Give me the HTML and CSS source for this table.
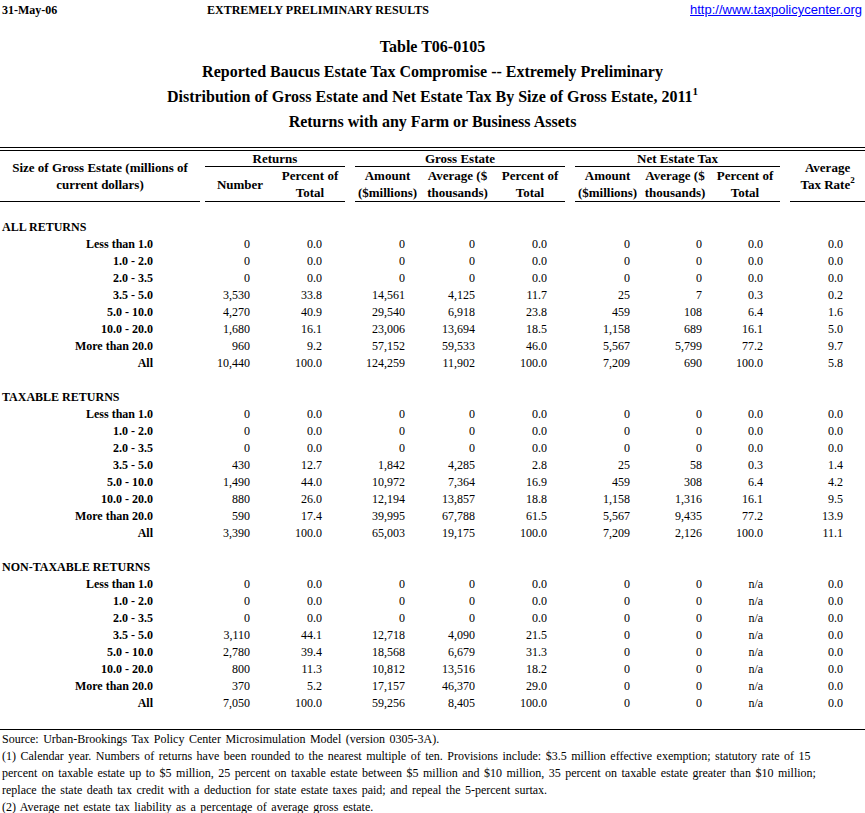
FILE: index.html
```html
<!DOCTYPE html>
<html>
<head>
<meta charset="utf-8">
<title>Table T06-0105</title>
<link rel="stylesheet" href="styles.css">
</head>
<body>
<div class="topbar">
  <span>31-May-06</span>
  <span>EXTREMELY PRELIMINARY RESULTS</span>
  <a href="#">http://www.taxpolicycenter.org</a>
</div>
<div class="titles">
  <div>Table T06-0105</div>
  <div>Reported Baucus Estate Tax Compromise -- Extremely Preliminary</div>
  <div>Distribution of Gross Estate and Net Estate Tax By Size of Gross Estate, 2011<sup>1</sup></div>
  <div>Returns with any Farm or Business Assets</div>
</div>
<table class="data">
  <colgroup>
    <col class="w-lab"><col class="w-sp5"><col class="w-70"><col class="w-70"><col class="w-sp10">
    <col class="w-65"><col class="w-75"><col class="w-70"><col class="w-sp10">
    <col class="w-65"><col class="w-70"><col class="w-70"><col class="w-sp10"><col class="w-75">
  </colgroup>
  <thead>
    <tr class="h1">
      <th rowspan="2" class="u">Size of Gross Estate (millions of<br>current dollars)</th>
      <th rowspan="2"></th>
      <th colspan="2" class="u">Returns</th>
      <th rowspan="2"></th>
      <th colspan="3" class="u">Gross Estate</th>
      <th rowspan="2"></th>
      <th colspan="3" class="u">Net Estate Tax</th>
      <th rowspan="2"></th>
      <th rowspan="2" class="u">Average<br>Tax Rate<sup>2</sup></th>
    </tr>
    <tr class="h2">
      <th class="u">Number</th>
      <th class="u">Percent of<br>Total</th>
      <th class="u">Amount<br>($millions)</th>
      <th class="u">Average ($<br>thousands)</th>
      <th class="u">Percent of<br>Total</th>
      <th class="u">Amount<br>($millions)</th>
      <th class="u">Average ($<br>thousands)</th>
      <th class="u">Percent of<br>Total</th>
    </tr>
  </thead>
  <tbody>
    <tr class="blank"><td colspan="14"></td></tr>
    <tr><td colspan="14" class="sec">ALL RETURNS</td></tr>
    <tr><td>Less than 1.0</td><td></td><td>0</td><td>0.0</td><td></td><td>0</td><td>0</td><td>0.0</td><td></td><td>0</td><td>0</td><td>0.0</td><td></td><td>0.0</td></tr>
    <tr><td>1.0 - 2.0</td><td></td><td>0</td><td>0.0</td><td></td><td>0</td><td>0</td><td>0.0</td><td></td><td>0</td><td>0</td><td>0.0</td><td></td><td>0.0</td></tr>
    <tr><td>2.0 - 3.5</td><td></td><td>0</td><td>0.0</td><td></td><td>0</td><td>0</td><td>0.0</td><td></td><td>0</td><td>0</td><td>0.0</td><td></td><td>0.0</td></tr>
    <tr><td>3.5 - 5.0</td><td></td><td>3,530</td><td>33.8</td><td></td><td>14,561</td><td>4,125</td><td>11.7</td><td></td><td>25</td><td>7</td><td>0.3</td><td></td><td>0.2</td></tr>
    <tr><td>5.0 - 10.0</td><td></td><td>4,270</td><td>40.9</td><td></td><td>29,540</td><td>6,918</td><td>23.8</td><td></td><td>459</td><td>108</td><td>6.4</td><td></td><td>1.6</td></tr>
    <tr><td>10.0 - 20.0</td><td></td><td>1,680</td><td>16.1</td><td></td><td>23,006</td><td>13,694</td><td>18.5</td><td></td><td>1,158</td><td>689</td><td>16.1</td><td></td><td>5.0</td></tr>
    <tr><td>More than 20.0</td><td></td><td>960</td><td>9.2</td><td></td><td>57,152</td><td>59,533</td><td>46.0</td><td></td><td>5,567</td><td>5,799</td><td>77.2</td><td></td><td>9.7</td></tr>
    <tr><td>All</td><td></td><td>10,440</td><td>100.0</td><td></td><td>124,259</td><td>11,902</td><td>100.0</td><td></td><td>7,209</td><td>690</td><td>100.0</td><td></td><td>5.8</td></tr>
    <tr class="blank"><td colspan="14"></td></tr>
    <tr><td colspan="14" class="sec">TAXABLE RETURNS</td></tr>
    <tr><td>Less than 1.0</td><td></td><td>0</td><td>0.0</td><td></td><td>0</td><td>0</td><td>0.0</td><td></td><td>0</td><td>0</td><td>0.0</td><td></td><td>0.0</td></tr>
    <tr><td>1.0 - 2.0</td><td></td><td>0</td><td>0.0</td><td></td><td>0</td><td>0</td><td>0.0</td><td></td><td>0</td><td>0</td><td>0.0</td><td></td><td>0.0</td></tr>
    <tr><td>2.0 - 3.5</td><td></td><td>0</td><td>0.0</td><td></td><td>0</td><td>0</td><td>0.0</td><td></td><td>0</td><td>0</td><td>0.0</td><td></td><td>0.0</td></tr>
    <tr><td>3.5 - 5.0</td><td></td><td>430</td><td>12.7</td><td></td><td>1,842</td><td>4,285</td><td>2.8</td><td></td><td>25</td><td>58</td><td>0.3</td><td></td><td>1.4</td></tr>
    <tr><td>5.0 - 10.0</td><td></td><td>1,490</td><td>44.0</td><td></td><td>10,972</td><td>7,364</td><td>16.9</td><td></td><td>459</td><td>308</td><td>6.4</td><td></td><td>4.2</td></tr>
    <tr><td>10.0 - 20.0</td><td></td><td>880</td><td>26.0</td><td></td><td>12,194</td><td>13,857</td><td>18.8</td><td></td><td>1,158</td><td>1,316</td><td>16.1</td><td></td><td>9.5</td></tr>
    <tr><td>More than 20.0</td><td></td><td>590</td><td>17.4</td><td></td><td>39,995</td><td>67,788</td><td>61.5</td><td></td><td>5,567</td><td>9,435</td><td>77.2</td><td></td><td>13.9</td></tr>
    <tr><td>All</td><td></td><td>3,390</td><td>100.0</td><td></td><td>65,003</td><td>19,175</td><td>100.0</td><td></td><td>7,209</td><td>2,126</td><td>100.0</td><td></td><td>11.1</td></tr>
    <tr class="blank"><td colspan="14"></td></tr>
    <tr><td colspan="14" class="sec">NON-TAXABLE RETURNS</td></tr>
    <tr><td>Less than 1.0</td><td></td><td>0</td><td>0.0</td><td></td><td>0</td><td>0</td><td>0.0</td><td></td><td>0</td><td>0</td><td>n/a</td><td></td><td>0.0</td></tr>
    <tr><td>1.0 - 2.0</td><td></td><td>0</td><td>0.0</td><td></td><td>0</td><td>0</td><td>0.0</td><td></td><td>0</td><td>0</td><td>n/a</td><td></td><td>0.0</td></tr>
    <tr><td>2.0 - 3.5</td><td></td><td>0</td><td>0.0</td><td></td><td>0</td><td>0</td><td>0.0</td><td></td><td>0</td><td>0</td><td>n/a</td><td></td><td>0.0</td></tr>
    <tr><td>3.5 - 5.0</td><td></td><td>3,110</td><td>44.1</td><td></td><td>12,718</td><td>4,090</td><td>21.5</td><td></td><td>0</td><td>0</td><td>n/a</td><td></td><td>0.0</td></tr>
    <tr><td>5.0 - 10.0</td><td></td><td>2,780</td><td>39.4</td><td></td><td>18,568</td><td>6,679</td><td>31.3</td><td></td><td>0</td><td>0</td><td>n/a</td><td></td><td>0.0</td></tr>
    <tr><td>10.0 - 20.0</td><td></td><td>800</td><td>11.3</td><td></td><td>10,812</td><td>13,516</td><td>18.2</td><td></td><td>0</td><td>0</td><td>n/a</td><td></td><td>0.0</td></tr>
    <tr><td>More than 20.0</td><td></td><td>370</td><td>5.2</td><td></td><td>17,157</td><td>46,370</td><td>29.0</td><td></td><td>0</td><td>0</td><td>n/a</td><td></td><td>0.0</td></tr>
    <tr><td>All</td><td></td><td>7,050</td><td>100.0</td><td></td><td>59,256</td><td>8,405</td><td>100.0</td><td></td><td>0</td><td>0</td><td>n/a</td><td></td><td>0.0</td></tr>
    <tr class="blank"><td colspan="14"></td></tr>
  </tbody>
</table>
<div class="notes">
  <p>Source: Urban-Brookings Tax Policy Center Microsimulation Model (version 0305-3A).</p>
  <p>(1) Calendar year. Numbers of returns have been rounded to the nearest multiple of ten. Provisions include: $3.5 million effective exemption; statutory rate of 15<br>percent on taxable estate up to $5 million, 25 percent on taxable estate between $5 million and $10 million, 35 percent on taxable estate greater than $10 million;<br>replace the state death tax credit with a deduction for state estate taxes paid; and repeal the 5-percent surtax.</p>
  <p>(2) Average net estate tax liability as a percentage of average gross estate.</p>
</div>
</body>
</html>
```
FILE: styles.css
```css
* { box-sizing: border-box; }
body {
  margin: 0;
  width: 865px;
  background: #fff;
  color: #000;
  font-family: "Liberation Serif", "Times New Roman", serif;
  font-size: 12px;
}
.topbar {
  display: grid;
  grid-template-columns: 205px 1fr auto;
  height: 20px;
  line-height: 20px;
  padding: 0 3px 0 2px;
  font-weight: bold;
}
.topbar a {
  font-family: "Liberation Sans", Arial, sans-serif;
  font-size: 13px;
  font-weight: normal;
  color: #00f;
  text-decoration: underline;
}
.titles {
  margin: 14px 0 13px;
  text-align: center;
  font-weight: bold;
  font-size: 16px;
  line-height: 25px;
}
sup {
  font-size: 9px;
  line-height: 0;
  vertical-align: 6px;
}
.titles sup { font-size: 11px; vertical-align: 7px; }

table.data {
  width: 865px;
  table-layout: fixed;
  border-collapse: collapse;
  border-top: 4px double #000;
}
.w-lab { width: 200px; }
.w-sp5 { width: 5px; }
.w-sp10 { width: 10px; }
.w-65 { width: 65px; }
.w-70 { width: 70px; }
.w-75 { width: 75px; }

th, td {
  padding: 0;
  white-space: nowrap;
}
th {
  font-size: 13px;
  font-weight: bold;
  text-align: center;
  vertical-align: middle;
  line-height: 17px;
}
tr.h1 th { height: 15px; line-height: 15px; }
tr.h1 th[rowspan] { line-height: 17px; }
tr.h2 th { height: 34px; }
th.u { border-bottom: 1px solid #000; }

td {
  height: 17px;
  line-height: 17px;
  text-align: right;
}
tbody td:nth-child(1) { font-weight: bold; padding-right: 47px; }
tbody td.sec { text-align: left; padding-left: 2px; padding-right: 0; }
tbody td:nth-child(3) { padding-right: 25px; }
tbody td:nth-child(4) { padding-right: 23px; }
tbody td:nth-child(6) { padding-right: 15px; }
tbody td:nth-child(7) { padding-right: 20px; }
tbody td:nth-child(8) { padding-right: 18px; }
tbody td:nth-child(10) { padding-right: 10px; }
tbody td:nth-child(11) { padding-right: 8px; }
tbody td:nth-child(12) { padding-right: 17px; }
tbody td:nth-child(14) { padding-right: 22px; }

.notes {
  border-top: 1px solid #000;
  padding: 1px 0 0 2px;
  line-height: 17px;
  word-spacing: 1.5px;
  white-space: nowrap;
}
.notes p { margin: 0; }
```
